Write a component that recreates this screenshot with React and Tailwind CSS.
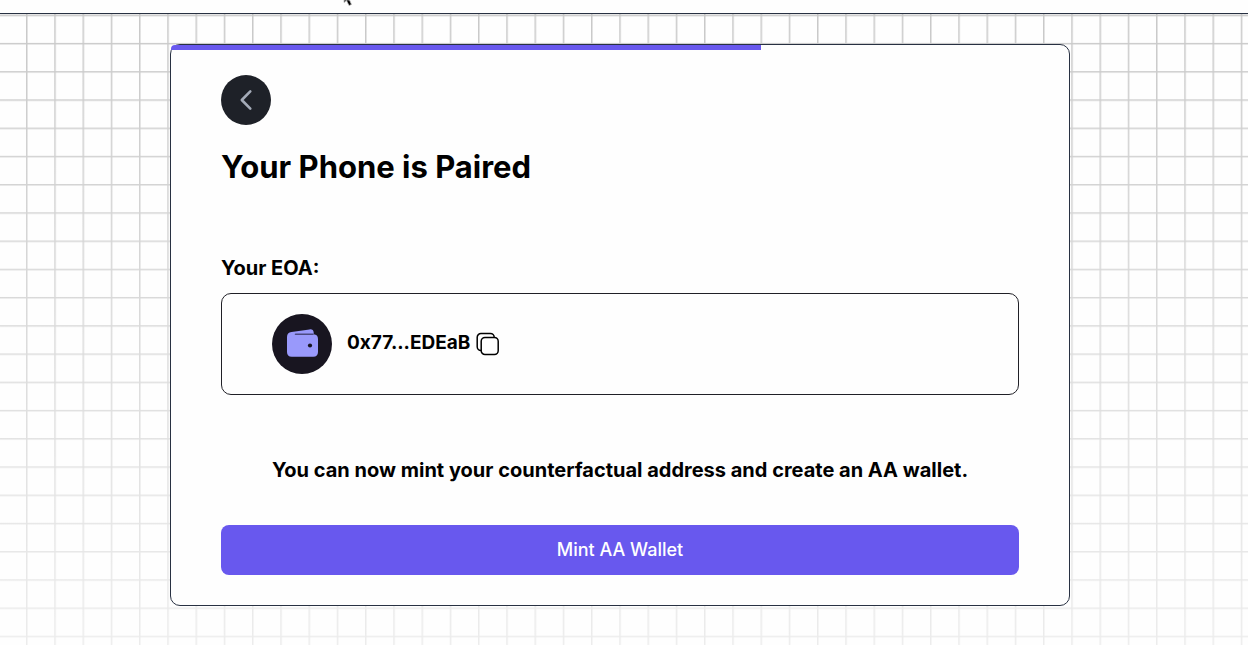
function GridBackdrop() {
  return (
    <svg
      aria-hidden="true"
      className="pointer-events-none absolute inset-0 -z-10 h-full w-full"
    >
      <defs>
        <pattern id="grid" x="26" y="28.9" width="28.25" height="28.23" patternUnits="userSpaceOnUse">
          <path d="M0.75 0V28.25M0 0.75H28.25" fill="none" stroke="#000" strokeWidth="1.5" />
        </pattern>
        <linearGradient id="fade" x1="0" y1="0" x2="0" y2="1">
          <stop offset="0" stopColor="#fff" stopOpacity="0.21" />
          <stop offset="1" stopColor="#fff" stopOpacity="0.07" />
        </linearGradient>
        <mask id="fade-mask">
          <rect width="100%" height="100%" fill="url(#fade)" />
        </mask>
      </defs>
      <rect width="100%" height="100%" fill="url(#grid)" mask="url(#fade-mask)" />
    </svg>
  );
}

function Pointer() {
  return (
    <svg aria-hidden="true" viewBox="0 0 12 7" className="absolute top-0 left-[343px] h-[7px] w-3">
      <path d="M1 0V2.5L3.5 0.5L6 5.5L8.5 4.5L6.5 0Z" fill="#000" stroke="#bbb" strokeWidth="0.8" />
    </svg>
  );
}

function WalletIcon() {
  return (
    <svg aria-hidden="true" viewBox="0 0 60 60" className="h-15 w-15 shrink-0">
      <circle cx="30" cy="30" r="30" fill="#181520" />
      <path
        d="M15 23C15 20 16.5 18.4 19.5 18L37.5 15.4C40 15 41.5 16.2 41.7 18.5V20.3C44.5 20.6 46 22 46 25V38C46 41 44.3 42.7 41.3 42.7H19.7C16.7 42.7 15 41 15 38Z"
        fill="#9999fb"
      />
      <path d="M23.5 20.2H41" stroke="#4b4980" strokeWidth="1.6" strokeLinecap="round" />
      <circle cx="38" cy="31.5" r="2.1" fill="#181520" />
    </svg>
  );
}

export default function App() {
  return (
    <div className="flex min-h-screen flex-col bg-[#fefefe] font-['Inter',sans-serif] text-black">
      <header className="relative h-3.5 border-b border-[#283142] shadow-xs">
        <Pointer />
      </header>
      <main className="relative isolate flex flex-1 flex-col items-center pt-[30px] pr-2 pb-10">
        <GridBackdrop />
        <section className="w-full max-w-[900px] rounded-[10px] border border-[#283142] bg-[#fefefe]">
          <div className="h-[5px] w-[590px] max-w-full rounded-tl-sm bg-[#6858ee]" />
          <div className="px-[50px] pt-[25px] pb-[30px]">
            <button
              type="button"
              aria-label="Back"
              className="flex h-[50px] w-[50px] items-center justify-center rounded-full bg-[#1e2128]"
            >
              <svg aria-hidden="true" viewBox="0 0 24 24" className="h-6 w-6">
                <path
                  d="M16.3 3.4L7.8 12L16.3 20.6"
                  fill="none"
                  stroke="#a4abb8"
                  strokeWidth="2.6"
                  strokeLinecap="round"
                  strokeLinejoin="round"
                />
              </svg>
            </button>
            <h1 className="mt-5 text-[31px] leading-[44px] font-bold">Your Phone is Paired</h1>
            <h2 className="mt-16 text-xl leading-[30px] font-bold">Your EOA:</h2>
            <div className="mt-2.5 flex items-center rounded-[10px] border border-[#202027] px-[50px] py-5">
              <WalletIcon />
              <span className="ml-[15px] pb-0.5 text-[19px] font-bold">0x77...EDEaB</span>
              <button type="button" aria-label="Copy address" className="ml-1.5">
                <svg aria-hidden="true" viewBox="0 0 24 24" className="block h-6 w-6">
                  <rect x="1.2" y="1.5" width="17" height="17" rx="3.8" fill="#fefefe" stroke="#000" strokeWidth="1.5" />
                  <rect x="5.2" y="5.5" width="17" height="17" rx="3.8" fill="#fefefe" stroke="#000" strokeWidth="1.5" />
                </svg>
              </button>
            </div>
            <p className="mt-[60px] text-center text-xl leading-[30px] font-bold">
              You can now mint your counterfactual address and create an AA wallet.
            </p>
            <button
              type="button"
              className="mt-10 h-[50px] w-full rounded-lg bg-[#6858ee] text-lg font-medium text-white"
            >
              Mint AA Wallet
            </button>
          </div>
        </section>
      </main>
    </div>
  );
}
